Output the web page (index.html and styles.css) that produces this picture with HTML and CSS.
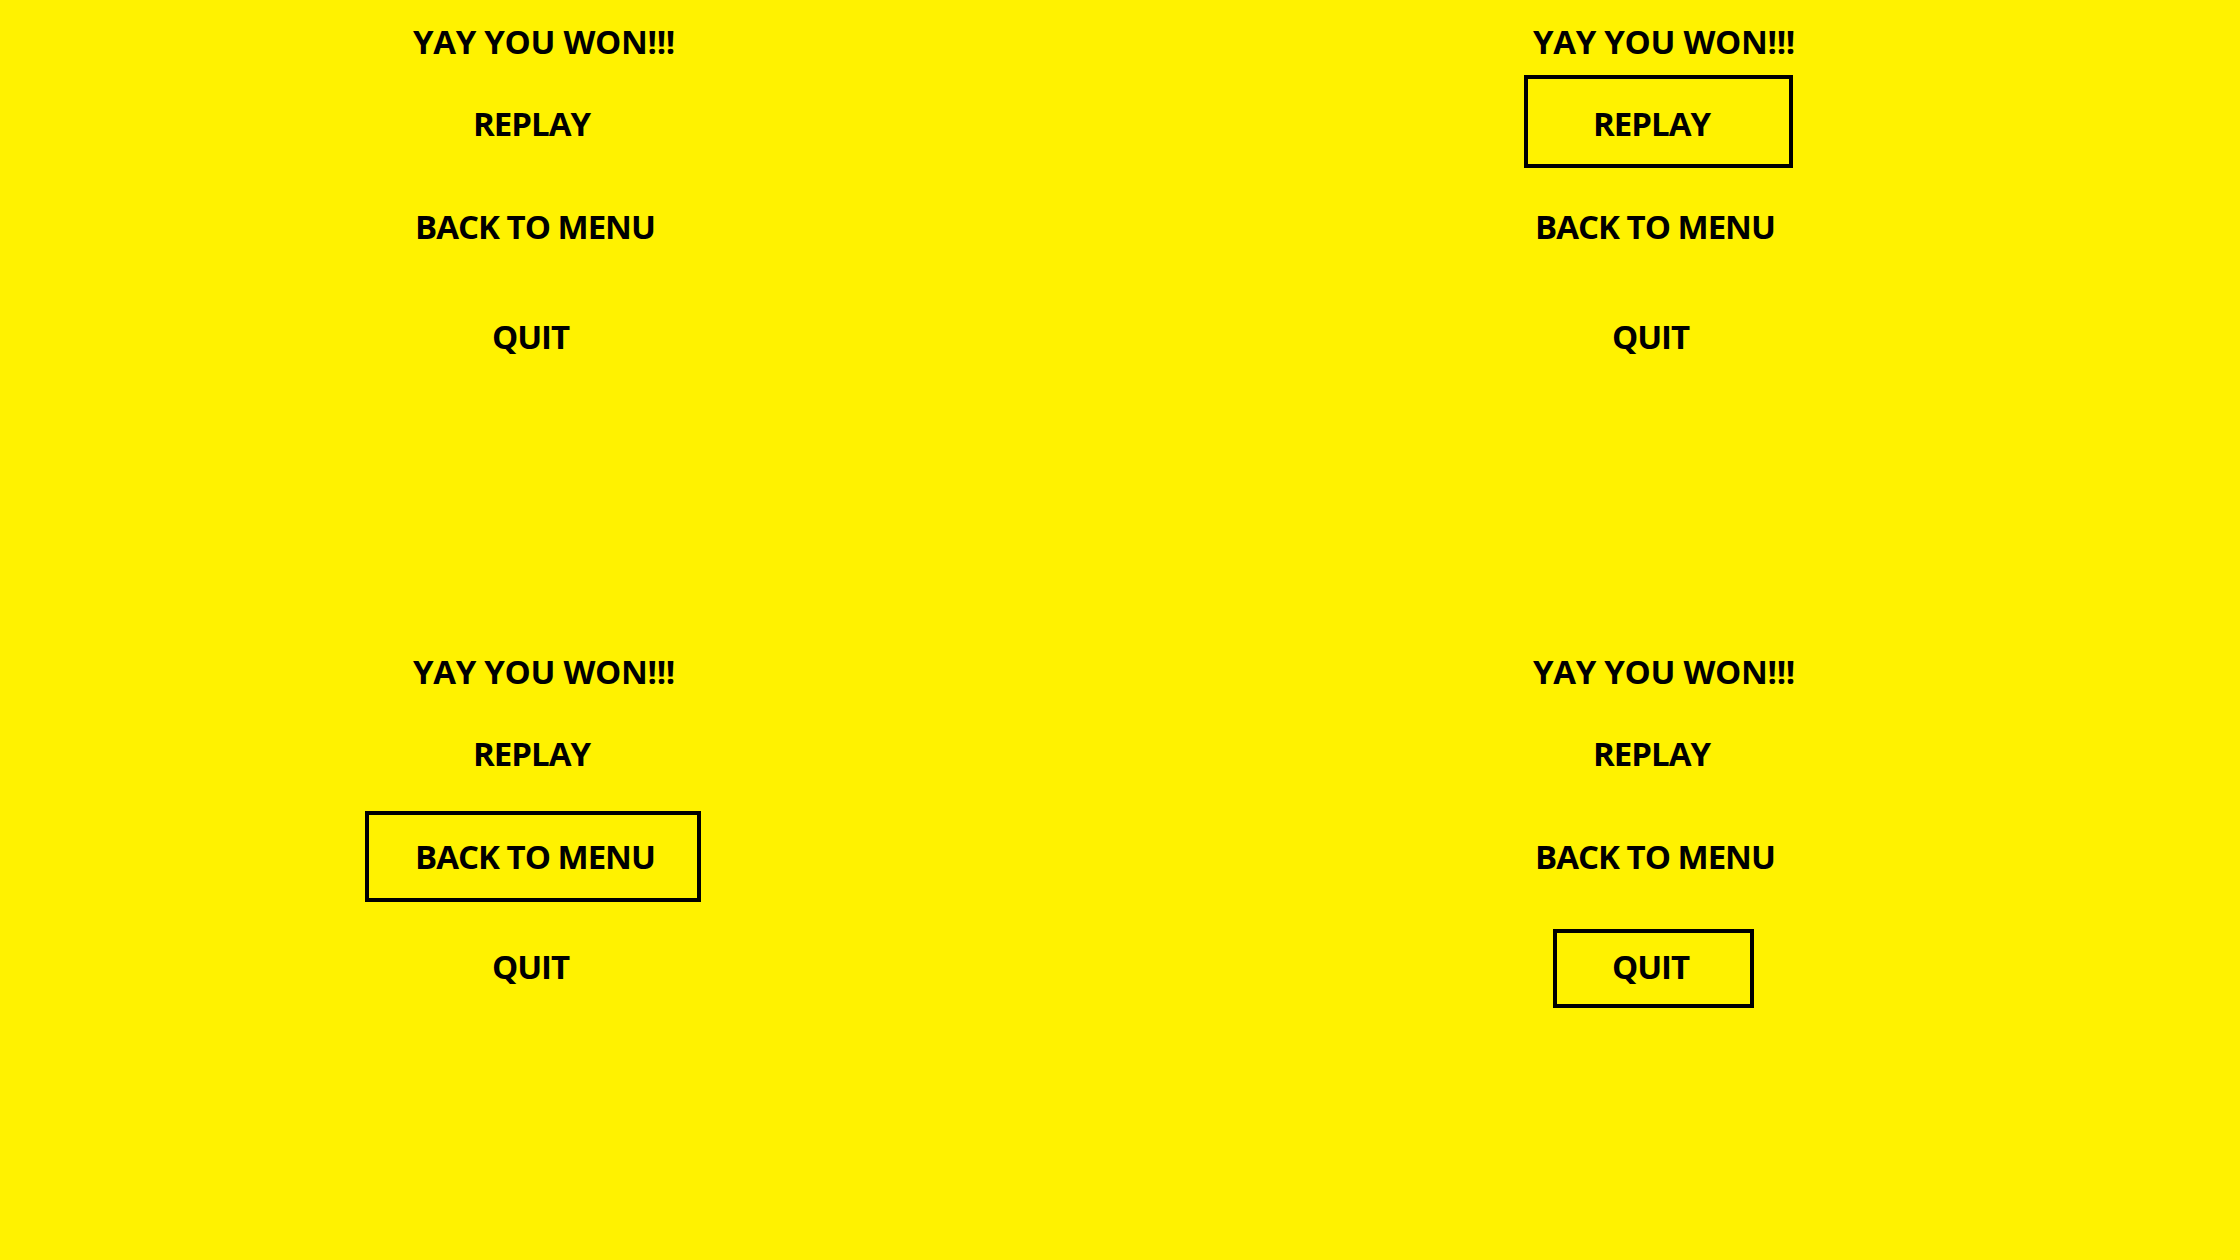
FILE: index.html
```html
<!DOCTYPE html>
<html>
<head>
<meta charset="utf-8">
<link rel="stylesheet" href="styles.css">
</head>
<body>
<div class="grid">
  <section class="panel">
    <div class="item heading">YAY YOU WON!!!</div>
    <div class="item replay">REPLAY</div>
    <div class="item back">BACK TO MENU</div>
    <div class="item quit">QUIT</div>
  </section>
  <section class="panel">
    <div class="item heading">YAY YOU WON!!!</div>
    <div class="item replay sel-replay">REPLAY</div>
    <div class="item back">BACK TO MENU</div>
    <div class="item quit">QUIT</div>
  </section>
  <section class="panel">
    <div class="item heading">YAY YOU WON!!!</div>
    <div class="item replay">REPLAY</div>
    <div class="item back sel-back">BACK TO MENU</div>
    <div class="item quit">QUIT</div>
  </section>
  <section class="panel">
    <div class="item heading">YAY YOU WON!!!</div>
    <div class="item replay">REPLAY</div>
    <div class="item back">BACK TO MENU</div>
    <div class="item quit sel-quit">QUIT</div>
  </section>
</div>
</body>
</html>
```

FILE: styles.css
```css
html, body {
  margin: 0;
  padding: 0;
  background: #fff200;
}
.grid {
  display: grid;
  grid-template-columns: 1120px 1120px;
  grid-template-rows: 630px 630px;
  width: 2240px;
  height: 1260px;
  background: #fff200;
}
.panel {
  display: flex;
  flex-direction: column;
  align-items: center;
  padding-top: 22px;
  padding-right: 50px;
  box-sizing: border-box;
  font-family: "Open Sans", "Liberation Sans", sans-serif;
  font-weight: 700;
  font-size: 33px;
  color: #000;
}
.item {
  line-height: 40px;
  height: 40px;
  white-space: nowrap;
  letter-spacing: -1px;
}
.heading { margin-left: 18px; letter-spacing: -0.3px; }
.replay { margin-top: 42px; margin-right: 7px; }
.back { margin-top: 63px; }
.quit { margin-top: 70px; margin-right: 9px; }

.sel-replay {
  border: 4px solid #000;
  padding: 25px 79px 20px 65px;
  margin-top: 13px;
  margin-bottom: -24px;
  margin-left: -69px;
  margin-right: -76px;
}
.sel-back {
  border: 4px solid #000;
  padding: 22px 42px 21px 46px;
  margin-top: 37px;
  margin-bottom: -25px;
  margin-left: -50px;
  margin-right: -46px;
}
.sel-quit {
  border: 4px solid #000;
  padding: 14px 61px 17px 55px;
  margin-top: 52px;
  margin-bottom: -21px;
  margin-left: -59px;
  margin-right: -56px;
}
```
